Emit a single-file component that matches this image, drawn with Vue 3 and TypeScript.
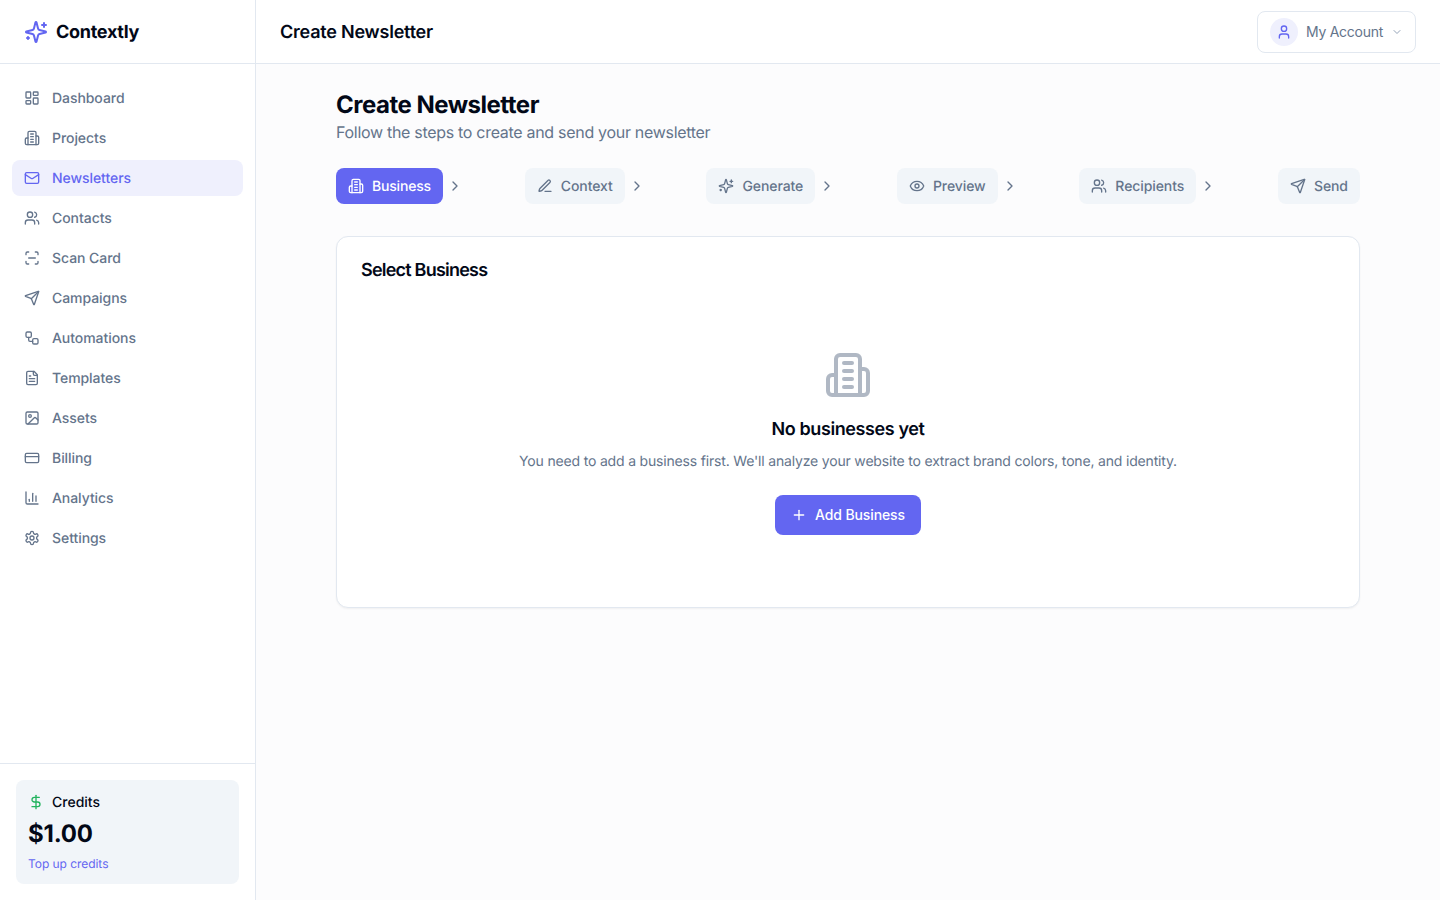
<script setup lang="ts">
const icons: Record<string, string> = {
  dashboard: '<rect width="7" height="9" x="3" y="3" rx="1"/><rect width="7" height="5" x="14" y="3" rx="1"/><rect width="7" height="9" x="14" y="12" rx="1"/><rect width="7" height="5" x="3" y="16" rx="1"/>',
  building: '<path d="M6 22V4a2 2 0 0 1 2-2h8a2 2 0 0 1 2 2v18Z"/><path d="M6 12H4a2 2 0 0 0-2 2v6a2 2 0 0 0 2 2h2"/><path d="M18 9h2a2 2 0 0 1 2 2v9a2 2 0 0 1-2 2h-2"/><path d="M10 6h4"/><path d="M10 10h4"/><path d="M10 14h4"/><path d="M10 18h4"/>',
  mail: '<rect width="20" height="16" x="2" y="4" rx="2"/><path d="m22 7-8.97 5.7a1.94 1.94 0 0 1-2.06 0L2 7"/>',
  users: '<path d="M16 21v-2a4 4 0 0 0-4-4H6a4 4 0 0 0-4 4v2"/><circle cx="9" cy="7" r="4"/><path d="M22 21v-2a4 4 0 0 0-3-3.87"/><path d="M16 3.13a4 4 0 0 1 0 7.75"/>',
  scan: '<path d="M3 7V5a2 2 0 0 1 2-2h2"/><path d="M17 3h2a2 2 0 0 1 2 2v2"/><path d="M21 17v2a2 2 0 0 1-2 2h-2"/><path d="M7 21H5a2 2 0 0 1-2-2v-2"/><path d="M7 12h10"/>',
  send: '<path d="M14.536 21.686a.5.5 0 0 0 .937-.024l6.5-19a.496.496 0 0 0-.635-.635l-19 6.5a.5.5 0 0 0-.024.937l7.93 3.18a2 2 0 0 1 1.112 1.11z"/><path d="m21.854 2.147-10.94 10.939"/>',
  workflow: '<rect width="8" height="8" x="3" y="3" rx="2"/><path d="M7 11v4a2 2 0 0 0 2 2h4"/><rect width="8" height="8" x="13" y="13" rx="2"/>',
  file: '<path d="M15 2H6a2 2 0 0 0-2 2v16a2 2 0 0 0 2 2h12a2 2 0 0 0 2-2V7Z"/><path d="M14 2v4a2 2 0 0 0 2 2h4"/><path d="M10 9H8"/><path d="M16 13H8"/><path d="M16 17H8"/>',
  image: '<rect width="18" height="18" x="3" y="3" rx="2"/><circle cx="9" cy="9" r="2"/><path d="m21 15-3.086-3.086a2 2 0 0 0-2.828 0L6 21"/>',
  card: '<rect width="20" height="14" x="2" y="5" rx="2"/><line x1="2" x2="22" y1="10" y2="10"/>',
  chart: '<path d="M3 3v16a2 2 0 0 0 2 2h16"/><path d="M18 17V9"/><path d="M13 17V5"/><path d="M8 17v-3"/>',
  settings: '<path d="M12.22 2h-.44a2 2 0 0 0-2 2v.18a2 2 0 0 1-1 1.73l-.43.25a2 2 0 0 1-2 0l-.15-.08a2 2 0 0 0-2.73.73l-.22.38a2 2 0 0 0 .73 2.73l.15.1a2 2 0 0 1 1 1.72v.51a2 2 0 0 1-1 1.74l-.15.09a2 2 0 0 0-.73 2.73l.22.38a2 2 0 0 0 2.73.73l.15-.08a2 2 0 0 1 2 0l.43.25a2 2 0 0 1 1 1.73V20a2 2 0 0 0 2 2h.44a2 2 0 0 0 2-2v-.18a2 2 0 0 1 1-1.73l.43-.25a2 2 0 0 1 2 0l.15.08a2 2 0 0 0 2.73-.73l.22-.39a2 2 0 0 0-.73-2.73l-.15-.08a2 2 0 0 1-1-1.74v-.5a2 2 0 0 1 1-1.74l.15-.09a2 2 0 0 0 .73-2.73l-.22-.38a2 2 0 0 0-2.73-.73l-.15.08a2 2 0 0 1-2 0l-.43-.25a2 2 0 0 1-1-1.73V4a2 2 0 0 0-2-2z"/><circle cx="12" cy="12" r="3"/>',
  sparkles: '<path d="M9.937 15.5A2 2 0 0 0 8.5 14.063l-6.135-1.582a.5.5 0 0 1 0-.962L8.5 9.936A2 2 0 0 0 9.937 8.5l1.582-6.135a.5.5 0 0 1 .963 0L14.063 8.5A2 2 0 0 0 15.5 9.937l6.135 1.581a.5.5 0 0 1 0 .964L15.5 14.063a2 2 0 0 0-1.437 1.437l-1.582 6.135a.5.5 0 0 1-.963 0z"/><path d="M20 3v4"/><path d="M22 5h-4"/><path d="M4 17v2"/><path d="M5 18H3"/>',
  pen: '<path d="M12 20h9"/><path d="M16.376 3.622a1 1 0 0 1 3.002 3.002L7.368 18.635a2 2 0 0 1-.855.506l-2.872.838a.5.5 0 0 1-.62-.62l.838-2.872a2 2 0 0 1 .506-.854z"/>',
  eye: '<path d="M2.062 12.348a1 1 0 0 1 0-.696 10.75 10.75 0 0 1 19.876 0 1 1 0 0 1 0 .696 10.75 10.75 0 0 1-19.876 0"/><circle cx="12" cy="12" r="3"/>',
  user: '<path d="M19 21v-2a4 4 0 0 0-4-4H9a4 4 0 0 0-4 4v2"/><circle cx="12" cy="7" r="4"/>',
  right: '<path d="m9 18 6-6-6-6"/>',
  down: '<path d="m6 9 6 6 6-6"/>',
  dollar: '<line x1="12" x2="12" y1="2" y2="22"/><path d="M17 5H9.5a3.5 3.5 0 0 0 0 7h5a3.5 3.5 0 0 1 0 7H6"/>',
  plus: '<path d="M5 12h14"/><path d="M12 5v14"/>',
}

const nav = [
  { label: 'Dashboard', icon: 'dashboard' },
  { label: 'Projects', icon: 'building' },
  { label: 'Newsletters', icon: 'mail', active: true },
  { label: 'Contacts', icon: 'users' },
  { label: 'Scan Card', icon: 'scan' },
  { label: 'Campaigns', icon: 'send' },
  { label: 'Automations', icon: 'workflow' },
  { label: 'Templates', icon: 'file' },
  { label: 'Assets', icon: 'image' },
  { label: 'Billing', icon: 'card' },
  { label: 'Analytics', icon: 'chart' },
  { label: 'Settings', icon: 'settings' },
]

const steps = [
  { label: 'Business', icon: 'building', active: true },
  { label: 'Context', icon: 'pen' },
  { label: 'Generate', icon: 'sparkles' },
  { label: 'Preview', icon: 'eye' },
  { label: 'Recipients', icon: 'users' },
  { label: 'Send', icon: 'send' },
]
</script>

<template>
  <div class="app">
    <aside class="sidebar">
      <div class="brand">
        <svg class="logo" viewBox="0 0 24 24" v-html="icons.sparkles"></svg>
        <span class="brand-name">Contextly</span>
      </div>
      <nav class="nav">
        <a v-for="item in nav" :key="item.label" class="nav-item" :class="{ active: item.active }">
          <svg class="ic" viewBox="0 0 24 24" v-html="icons[item.icon]"></svg>
          <span>{{ item.label }}</span>
        </a>
      </nav>
      <div class="side-foot">
        <div class="credits">
          <div class="credits-head">
            <svg class="ic dollar" viewBox="0 0 24 24" v-html="icons.dollar"></svg>
            <span class="credits-label">Credits</span>
          </div>
          <div class="credits-amount">$1.00</div>
          <a class="credits-link">Top up credits</a>
        </div>
      </div>
    </aside>
    <div class="main">
      <header class="topbar">
        <h1 class="top-title">Create Newsletter</h1>
        <button class="account">
          <span class="avatar"><svg class="ic" viewBox="0 0 24 24" v-html="icons.user"></svg></span>
          <span class="account-name">My Account</span>
          <svg class="ic chev-down" viewBox="0 0 24 24" v-html="icons.down"></svg>
        </button>
      </header>
      <main class="content">
        <div class="inner">
          <h2 class="page-title">Create Newsletter</h2>
          <p class="page-sub">Follow the steps to create and send your newsletter</p>
          <div class="steps">
            <div v-for="(s, i) in steps" :key="s.label" class="step-wrap">
              <div class="step" :class="{ active: s.active }">
                <svg class="ic" viewBox="0 0 24 24" v-html="icons[s.icon]"></svg>
                <span>{{ s.label }}</span>
              </div>
              <svg v-if="i < steps.length - 1" class="ic chev" viewBox="0 0 24 24" v-html="icons.right"></svg>
            </div>
          </div>
          <section class="card">
            <h3 class="card-title">Select Business</h3>
            <div class="empty">
              <svg class="empty-ic" viewBox="0 0 24 24" v-html="icons.building"></svg>
              <h4 class="empty-title">No businesses yet</h4>
              <p class="empty-text">You need to add a business first. We'll analyze your website to extract brand colors, tone, and identity.</p>
              <button class="add">
                <svg class="ic" viewBox="0 0 24 24" v-html="icons.plus"></svg>
                <span class="add-label">Add Business</span>
              </button>
            </div>
          </section>
        </div>
      </main>
    </div>
  </div>
</template>

<style>
html, body { margin: 0; padding: 0; }
</style>

<style scoped>
* { box-sizing: border-box; }
.app {
  display: flex;
  height: 900px;
  font-family: Inter, "Liberation Sans", sans-serif;
  color: #020817;
  background: #fcfcfd;
  overflow: hidden;
  text-rendering: geometricPrecision;
}
svg { fill: none; stroke: currentColor; stroke-width: 2; stroke-linecap: round; stroke-linejoin: round; flex: none; }
.ic { width: 16px; height: 16px; }

.sidebar {
  width: 256px;
  flex: none;
  display: flex;
  flex-direction: column;
  background: #fff;
  border-right: 1px solid #e2e8f0;
}
.brand {
  height: 64px;
  flex: none;
  display: flex;
  align-items: center;
  gap: 8px;
  padding: 0 24px;
  border-bottom: 1px solid #e2e8f0;
}
.logo { width: 24px; height: 24px; color: #6366f1; }
.brand-name { padding-top: 2px; font-size: 18px; font-weight: 700; line-height: 28px; letter-spacing: -0.29px; }
.nav {
  flex: 1;
  display: flex;
  flex-direction: column;
  gap: 4px;
  padding: 16px 12px;
}
.nav-item {
  display: flex;
  align-items: center;
  gap: 12px;
  height: 36px;
  padding: 0 12px;
  border-radius: 8px;
  font-size: 14px;
  font-weight: 450;
  letter-spacing: -0.06px;
  color: #64748b;
}
.nav-item.active { background: #eff0fd; color: #6366f1; }
.side-foot { padding: 16px; border-top: 1px solid #e2e8f0; }
.credits {
  height: 104px;
  padding: 12px;
  border-radius: 8px;
  background: #f1f5f9;
}
.credits-head {
  display: flex;
  align-items: center;
  gap: 8px;
  height: 20px;
  font-size: 14px;
  font-weight: 450;
  line-height: 20px;
}
.credits-label { padding-top: 2px; }
.dollar { color: #22b35e; }
.credits-amount { margin-top: 6px; font-size: 24px; font-weight: 700; line-height: 32px; letter-spacing: -0.2px; }
.credits-link { display: block; margin-top: 6px; font-size: 12px; line-height: 16px; letter-spacing: -0.05px; color: #6366f1; }

.main { flex: 1; min-width: 0; display: flex; flex-direction: column; }
.topbar {
  height: 64px;
  flex: none;
  display: flex;
  align-items: center;
  justify-content: space-between;
  padding: 0 24px;
  background: #fff;
  border-bottom: 1px solid #e2e8f0;
}
.top-title { margin: 0; padding-top: 2px; font-size: 18px; font-weight: 600; line-height: 28px; letter-spacing: -0.22px; }
.account {
  display: flex;
  align-items: center;
  gap: 8px;
  height: 42px;
  padding: 0 12px;
  background: #fff;
  border: 1px solid #e2e8f0;
  border-radius: 8px;
  font: inherit;
  font-size: 14px;
  font-weight: 400;
  letter-spacing: -0.27px;
  color: #64748b;
}
.avatar {
  width: 28px;
  height: 28px;
  display: flex;
  align-items: center;
  justify-content: center;
  border-radius: 50%;
  background: #eff0fd;
  color: #6366f1;
}
.chev-down { width: 12px; height: 12px; color: #94a3b8; }

.content { flex: 1; padding: 24px 32px; }
.inner { width: 1024px; margin: 0 auto; }
.page-title { margin: 2px 0 0; font-size: 24px; font-weight: 700; line-height: 30px; letter-spacing: -0.5px; }
.page-sub { margin: 0; font-size: 16px; line-height: 24px; letter-spacing: -0.3px; color: #64748b; }
.steps {
  display: flex;
  justify-content: space-between;
  margin-top: 24px;
}
.step-wrap { display: flex; align-items: center; gap: 4px; }
.step {
  display: flex;
  align-items: center;
  gap: 8px;
  height: 36px;
  padding: 0 12px;
  border-radius: 8px;
  background: #f1f5f9;
  color: #64748b;
  font-size: 14px;
  font-weight: 450;
  letter-spacing: -0.09px;
}
.step.active { background: #6366f1; color: #fff; letter-spacing: -0.18px; }
.chev { color: #64748b; }
.card {
  height: 372px;
  margin-top: 32px;
  padding: 24px;
  background: #fff;
  border: 1px solid #e2e8f0;
  border-radius: 12px;
  box-shadow: 0 1px 2px rgba(0, 0, 0, 0.05);
}
.card-title { margin: 0; font-size: 18px; font-weight: 600; line-height: 20px; letter-spacing: -0.78px; color: #020817; }
.empty {
  display: flex;
  flex-direction: column;
  align-items: center;
  padding-top: 70px;
}
.empty-ic { width: 48px; height: 48px; color: #64748b; opacity: 0.5; }
.empty-title { margin: 17px 0 0; font-size: 18px; font-weight: 600; line-height: 28px; letter-spacing: -0.4px; }
.empty-text { margin: 8px 0 0; font-size: 14px; line-height: 20px; letter-spacing: -0.176px; color: #64748b; }
.add {
  display: flex;
  align-items: center;
  gap: 8px;
  height: 40px;
  margin-top: 23px;
  padding: 0 16px;
  border: 0;
  border-radius: 8px;
  background: #6366f1;
  color: #fff;
  font: inherit;
  font-size: 14px;
  font-weight: 450;
  letter-spacing: -0.12px;
}
.add-label { padding-bottom: 1px; }
</style>
